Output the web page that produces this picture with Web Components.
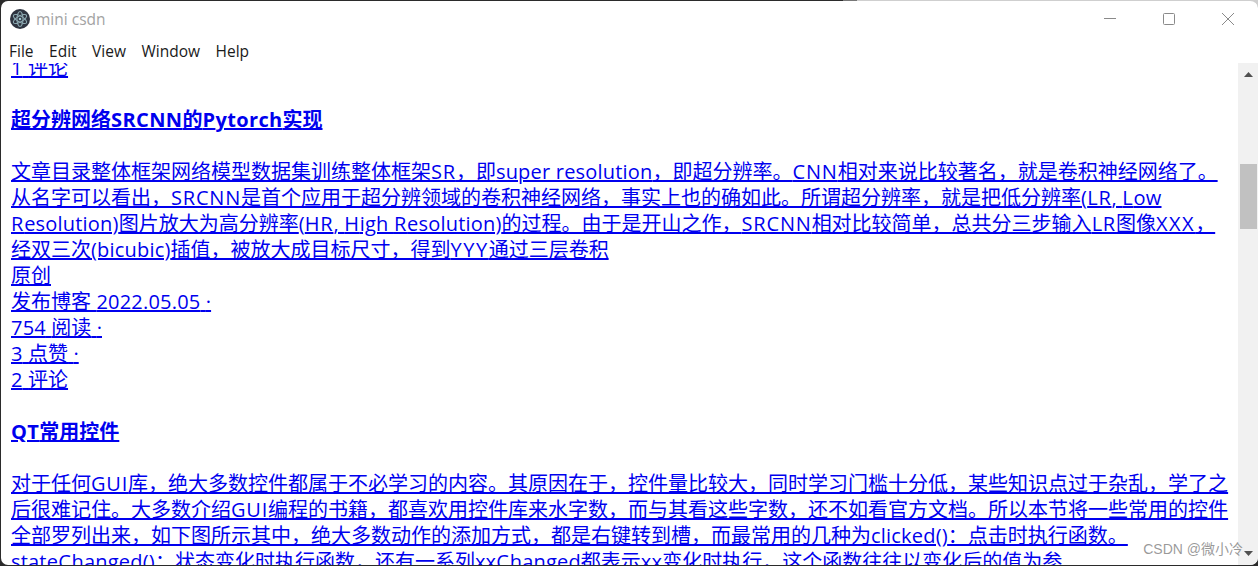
<!DOCTYPE html>
<html>
<head>
<meta charset="utf-8">
<title>mini csdn</title>
<style>
    html, body { margin: 0; height: 100%; overflow: hidden; }
    body { background: linear-gradient(#cfcfcf, #cfcfcf) right top / 401px 12px no-repeat, linear-gradient(#777, #777) right top / 415px 12px no-repeat, #2b2b2b; }
</style>
</head>
<body>
<app-window>
    <title-bar slot="title" label="mini csdn"></title-bar>
    <menu-bar slot="menu" items="File,Edit,View,Window,Help"></menu-bar>
    <post-list>
        <post-item stats="1 评论"></post-item>
        <post-item title="超分辨网络SRCNN的Pytorch实现" stats="原创|发布博客 2022.05.05 ·|754 阅读 ·|3 点赞 ·|2 评论">文章目录整体框架网络模型数据集训练整体框架SR，即super resolution，即超分辨率。CNN相对来说比较著名，就是卷积神经网络了。
从名字可以看出，SRCNN是首个应用于超分辨领域的卷积神经网络，事实上也的确如此。所谓超分辨率，就是把低分辨率(LR, Low
Resolution)图片放大为高分辨率(HR, High Resolution)的过程。由于是开山之作，SRCNN相对比较简单，总共分三步输入LR图像XXX，
经双三次(bicubic)插值，被放大成目标尺寸，得到YYY通过三层卷积</post-item>
        <post-item title="QT常用控件">对于任何GUI库，绝大多数控件都属于不必学习的内容。其原因在于，控件量比较大，同时学习门槛十分低，某些知识点过于杂乱，学了之
后很难记住。大多数介绍GUI编程的书籍，都喜欢用控件库来水字数，而与其看这些字数，还不如看官方文档。所以本节将一些常用的控件
全部罗列出来，如下图所示其中，绝大多数动作的添加方式，都是右键转到槽，而最常用的几种为clicked()：点击时执行函数。
stateChanged()：状态变化时执行函数，还有一系列xxChanged都表示xx变化时执行，这个函数往往以变化后的值为参</post-item>
    </post-list>
    <scroll-bar slot="scroll"></scroll-bar>
    <water-mark slot="mark">CSDN @微小冷</water-mark>
</app-window>

<script>
class AppWindow extends HTMLElement {
    constructor() {
        super();
        this.attachShadow({ mode: 'open' });
        this.shadowRoot.innerHTML = `
            <style>
                :host { display: flex; flex-direction: column; height: 566px; box-sizing: border-box;
                    background: #fff padding-box; border: solid transparent; border-width: 1px 0 1px 1px;
                    border-radius: 8px; overflow: hidden; position: relative;
                    font-family: "Open Sans", "Noto Sans CJK SC", sans-serif; }
                .body { flex: 1; min-height: 0; display: flex; margin-top: 2px; }
                .content { flex: 1; min-width: 0; overflow: hidden; }
            </style>
            <slot name="title"></slot>
            <slot name="menu"></slot>
            <div class="body">
                <div class="content"><slot></slot></div>
                <slot name="scroll"></slot>
            </div>
            <slot name="mark"></slot>
        `;
    }
}

class TitleBar extends HTMLElement {
    constructor() {
        super();
        this.attachShadow({ mode: 'open' });
    }

    connectedCallback() {
        const label = this.getAttribute('label') || '';
        this.shadowRoot.innerHTML = `
            <style>
                :host { display: flex; align-items: center; height: 36px; padding: 0 1px 0 9px; color: #a3a3a3; font-size: 15.5px; }
                svg { display: block; flex: none; }
                .logo { margin-right: 6px; }
                .label { flex: 1; }
                .btn { width: 59px; display: flex; justify-content: center; }
            </style>
            <svg class="logo" width="20" height="20" viewBox="0 0 20 20">
                <circle cx="10" cy="10" r="10" fill="#2e3440"/>
                <g fill="none" stroke="#8aa6ae" stroke-width="1.1">
                    <ellipse cx="10" cy="10" rx="7.5" ry="3" transform="rotate(30 10 10)"/>
                    <ellipse cx="10" cy="10" rx="7.5" ry="3" transform="rotate(90 10 10)"/>
                    <ellipse cx="10" cy="10" rx="7.500" ry="3" transform="rotate(150 10 10)"/>
                </g>
                <circle cx="10" cy="10" r="1.3" fill="#9fc4cd"/>
            </svg>
            <span class="label">${label}</span>
            <div class="btn"><svg width="12" height="12" viewBox="0 0 12 12"><path d="M0 5.500h12" stroke="#8a8a8a" fill="none"/></svg></div>
            <div class="btn"><svg width="12" height="12" viewBox="0 0 12 12"><rect x=".5" y=".5" width="11" height="11" rx="1" stroke="#8a8a8a" fill="none"/></svg></div>
            <div class="btn"><svg width="12" height="12" viewBox="0 0 12 12"><path d="M0 0l12 12M12 0L0 12" stroke="#8a8a8a" fill="none"/></svg></div>
        `;
    }
}

class MenuBar extends HTMLElement {
    constructor() {
        super();
        this.attachShadow({ mode: 'open' });
    }

    connectedCallback() {
        const items = (this.getAttribute('items') || '').split(',');
        this.shadowRoot.innerHTML = `
            <style>
                :host { display: flex; gap: 15.5px; height: 20px; align-items: center; padding: 4px 0 0 8px; color: #1a1a1a; font-size: 15.5px; }
            </style>
            ${items.map(i => `<span>${i}</span>`).join('')}
        `;
    }
}

class PostList extends HTMLElement {
    constructor() {
        super();
        this.attachShadow({ mode: 'open' });
        this.shadowRoot.innerHTML = `
            <style>
                :host { display: block; margin-top: -8px; padding-left: 10px; }
            </style>
            <slot></slot>
        `;
    }
}

// the reference font is wider than Open Sans, capitals most, digits least
function spaceLatin(text) {
    return text
        .replace(/[A-Z]+/g, m => `<span class="${/^[XY]+$/.test(m) ? 'wd' : 'up'}">${m}</span>`)
        .replace(/[a-z(), ]+(?![^<]*>)/g, m => `<span class="lo">${m}</span>`)
        .replace(/[0-9.]+(?![^<]*>)/g, m => `<span class="nu">${m}</span>`);
}

class PostItem extends HTMLElement {
    constructor() {
        super();
        this.attachShadow({ mode: 'open' });
    }

    connectedCallback() {
        const title = this.getAttribute('title');
        const stats = (this.getAttribute('stats') || '').split('|').filter(Boolean);
        const lines = this.textContent.split('\n').map(l => l.trim()).filter(Boolean);
        this.shadowRoot.innerHTML = `
            <style>
                :host { display: block; font-size: 20px; line-height: 26px; color: #00e; white-space: nowrap; }
                a { color: inherit; text-decoration: underline; text-decoration-thickness: 2px; text-underline-offset: 1px; }
                h3 { font-size: 20px; line-height: 26px; font-weight: 700; margin: 26px 0; }
                .up { letter-spacing: .8px; }
                .wd { letter-spacing: 1.5px; }
                .lo { letter-spacing: .2px; }
                .nu { letter-spacing: .2px; }
                h3 .up { letter-spacing: .4px; }
                h3 .lo { letter-spacing: .35px; }
                .row { display: block; }
            </style>
            ${title ? `<h3><a href="#">${spaceLatin(title)}</a></h3>` : ''}
            ${lines.length ? `<a href="#">${lines.map(spaceLatin).join('<br>')}</a>` : ''}
            ${stats.map(s => `<div class="row"><a href="#">${spaceLatin(s)}</a></div>`).join('')}
        `;
    }
}

class ScrollBar extends HTMLElement {
    constructor() {
        super();
        this.attachShadow({ mode: 'open' });
        this.shadowRoot.innerHTML = `
            <style>
                :host { display: flex; flex-direction: column; flex: none; width: 20px; background: #f1f1f1; }
                .arrow { height: 23px; flex: none; display: flex; align-items: center; justify-content: center; }
                .before { height: 78px; flex: none; }
                .thumb { width: 17px; height: 65px; flex: none; margin-left: 2px; background: #c1c1c1; }
                .after { flex: 1; }
                svg { display: block; }
            </style>
            <div class="arrow"><svg width="9" height="5" viewBox="0 0 9 5"><path d="M4.5 0L9 5H0z" fill="#505050"/></svg></div>
            <div class="before"></div>
            <div class="thumb"></div>
            <div class="after"></div>
            <div class="arrow"><svg width="9" height="5" viewBox="0 0 9 5"><path d="M0 0h9L4.500 5z" fill="#505050"/></svg></div>
        `;
    }
}

class WaterMark extends HTMLElement {
    constructor() {
        super();
        this.attachShadow({ mode: 'open' });
        this.shadowRoot.innerHTML = `
            <style>
                :host { position: absolute; right: 15px; bottom: 7px; color: rgba(120,120,120,.75); font-size: 14px; line-height: 18px;
                    font-family: "Liberation Sans", "Noto Sans CJK SC", sans-serif; }
            </style>
            <slot></slot>
        `;
    }
}

customElements.define('app-window', AppWindow);
customElements.define('title-bar', TitleBar);
customElements.define('menu-bar', MenuBar);
customElements.define('post-list', PostList);
customElements.define('post-item', PostItem);
customElements.define('scroll-bar', ScrollBar);
customElements.define('water-mark', WaterMark);
</script>
</body>
</html>
